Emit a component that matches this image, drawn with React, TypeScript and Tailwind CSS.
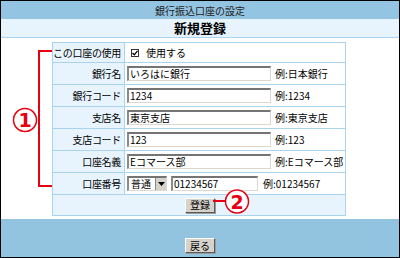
import type { ReactNode } from "react";

const font = { fontFamily: '"Noto Sans CJK JP", "Noto Sans", sans-serif' };

function Field({ value, width = "w-[144px]" }: { value: string; width?: string }) {
  return (
    <div
      className={`${width} h-[15px] bg-white border-t-2 border-l-2 border-t-[#747474] border-l-[#8a8a8a] border-b border-r border-b-[#dcd8d0] border-r-[#dcd8d0] flex items-center pl-[1px] text-[10px] leading-none text-black`}
    >
      {value}
    </div>
  );
}

function Row({ label, children, first }: { label: string; children: ReactNode; first?: boolean }) {
  return (
    <div className={`flex ${first ? "h-[20px]" : "h-[22px]"} border-b border-[#a9d3ee]`}>
      <div className="w-[72px] shrink-0 bg-[#e8f4fd] border-r border-[#a9d3ee] flex items-center justify-end pr-[3px] text-[10px] tracking-[-0.3px] text-black whitespace-nowrap">
        {label}
      </div>
      <div className="flex-1 bg-white flex items-center pl-[2px] gap-[4px] text-[10px] text-black whitespace-nowrap">
        {children}
      </div>
    </div>
  );
}

function Button({ children }: { children: ReactNode }) {
  return (
    <div className="h-[15px] px-[4px] bg-[#d6d3cc] border border-t-white border-l-white border-b-[#5a5a5a] border-r-[#5a5a5a] shadow-[1px_1px_0_#9a9a9a] flex items-center text-[10px] leading-none text-black">
      {children}
    </div>
  );
}

export default function App() {
  return (
    <div className="relative w-[400px] h-[258px] overflow-hidden" style={font}>
      <div className="w-full h-full border border-black flex flex-col bg-white">
        <div className="h-[18px] bg-[#93c4e1] flex items-center justify-center text-[10px] text-[#222]">
          銀行振込口座の設定
        </div>
        <div className="h-[19px] bg-[#e8f4fd] border-b border-[#a9d3ee] flex items-center justify-center text-[13px] font-bold text-black">
          新規登録
        </div>
        <div className="h-[181px] pt-[4px]">
          <div className="ml-[51px] w-[294px] border-t border-l border-r border-[#a9d3ee] flex flex-col">
            <Row label="この口座の使用" first>
              <div className="ml-[4px] w-[8px] h-[8px] border border-[#333] bg-white flex items-center justify-center">
                <svg width="6" height="6" viewBox="0 0 6 6">
                  <path d="M0.5 3 L2.3 4.8 L5.5 0.8" stroke="#000" strokeWidth="1.3" fill="none" />
                </svg>
              </div>
              <span className="ml-[3px]">使用する</span>
            </Row>
            <Row label="銀行名">
              <Field value="いろはに銀行" />
              <span>例:日本銀行</span>
            </Row>
            <Row label="銀行コード">
              <Field value="1234" />
              <span>例:1234</span>
            </Row>
            <Row label="支店名">
              <Field value="東京支店" />
              <span>例:東京支店</span>
            </Row>
            <Row label="支店コード">
              <Field value="123" />
              <span>例:123</span>
            </Row>
            <Row label="口座名義">
              <Field value="Eコマース部" />
              <span>例:Eコマース部</span>
            </Row>
            <Row label="口座番号">
              <div className="w-[40px] h-[15px] bg-white border-t-2 border-l-2 border-t-[#747474] border-l-[#8a8a8a] border-b border-r border-b-[#dcd8d0] border-r-[#dcd8d0] flex items-center justify-between">
                <span className="pl-[2px] text-[10px] leading-none">普通</span>
                <div className="w-[11px] h-full bg-[#d6d3cc] border-l border-[#888] flex items-center justify-center">
                  <svg width="7" height="4" viewBox="0 0 7 4">
                    <path d="M0 0 H7 L3.5 4 Z" fill="#000" />
                  </svg>
                </div>
              </div>
              <Field value="01234567" width="w-[87px]" />
              <span className="ml-[1px]">例:01234567</span>
            </Row>
            <div className="h-[21px] bg-[#e8f4fd] border-b border-[#a9d3ee] flex items-center justify-center pl-[2px]">
              <Button>登録</Button>
            </div>
          </div>
        </div>
        <div className="flex-1 bg-[#92c3df] flex justify-center pt-[19px]">
          <Button>戻る</Button>
        </div>
      </div>

      <svg className="absolute inset-0 pointer-events-none" width="400" height="258" viewBox="0 0 400 258">
        <path d="M52 51 H39 V186 H52" stroke="#e60012" strokeWidth="2" fill="none" />
        <circle cx="25" cy="120" r="11.5" fill="#fff" stroke="#e60012" strokeWidth="1.5" />
        <text x="25" y="127" textAnchor="middle" fontSize="19" fontWeight="900" fill="#e60012" style={{ fontFamily: '"DejaVu Sans", sans-serif' }}>
          1
        </text>
        <path d="M213 201 H225" stroke="#e60012" strokeWidth="2" />
        <circle cx="237" cy="201.5" r="11.5" fill="#fff" stroke="#e60012" strokeWidth="1.5" />
        <text x="237" y="208.5" textAnchor="middle" fontSize="19" fontWeight="900" fill="#e60012" style={{ fontFamily: '"DejaVu Sans", sans-serif' }}>
          2
        </text>
      </svg>
    </div>
  );
}
